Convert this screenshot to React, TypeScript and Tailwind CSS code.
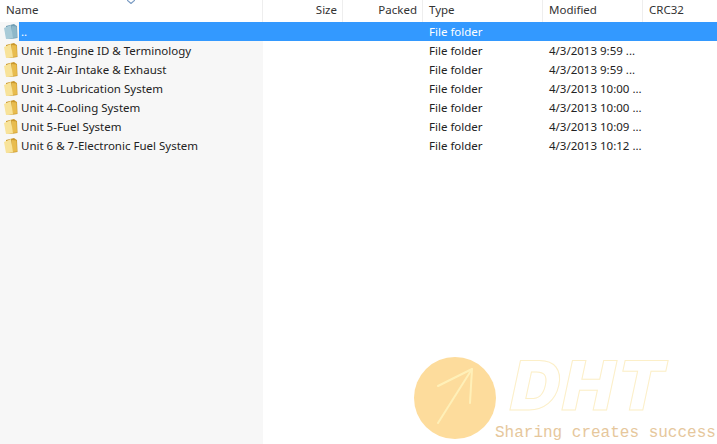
const rows = [
  'Unit 1-Engine ID & Terminology',
  'Unit 2-Air Intake & Exhaust',
  'Unit 3 -Lubrication System',
  'Unit 4-Cooling System',
  'Unit 5-Fuel System',
  'Unit 6 & 7-Electronic Fuel System',
]
const dates = ['4/3/2013 9:59 ...', '4/3/2013 9:59 ...', '4/3/2013 10:00 ...', '4/3/2013 10:00 ...', '4/3/2013 10:09 ...', '4/3/2013 10:12 ...']

function Folder({ up }: { up?: boolean }) {
  return (
    <svg width="15" height="17" viewBox="0 0 15 17" className="shrink-0">
      <path d="M3 3 L11 1 L13 2.5 L14 3 L14.5 15 L8 16 L3 15 Z" fill={up ? '#6f9db3' : '#c8962a'} />
      <path d="M9 3 L13.5 3.5 L14 14.5 L9 15 Z" fill={up ? '#8fb8c9' : '#e8bc4e'} />
      <path d="M1 5 L8 2 L10 15.5 L3 16 Z" fill={up ? '#a9cbd8' : '#f8e39a'} />
    </svg>
  )
}

export default function App() {
  return (
    <div className="relative w-[717px] h-[444px] overflow-hidden bg-white text-[11.5px] text-[#222] font-['Noto_Sans',sans-serif]">
      <div className="flex h-[22px] items-center leading-[20px] text-[#333]">
        <div className="relative w-[263px] pl-[6px] pb-[3px] border-r border-[#eeeeee] h-full flex items-center">
          Name
          <svg width="8" height="4" viewBox="0 0 8 4" className="absolute left-[127px] top-0">
            <path d="M0 0 L4 3.5 L8 0" fill="none" stroke="#7b9cc4" strokeWidth="1.2" />
          </svg>
        </div>
        <div className="w-[80px] pr-[5px] pb-[3px] text-right border-r border-[#eeeeee] h-full flex items-center justify-end">Size</div>
        <div className="w-[80px] pr-[5px] pb-[3px] text-right border-r border-[#eeeeee] h-full flex items-center justify-end">Packed</div>
        <div className="w-[120px] pl-[6px] pb-[3px] border-r border-[#eeeeee] h-full flex items-center">Type</div>
        <div className="w-[100px] pl-[6px] pb-[3px] border-r border-[#eeeeee] h-full flex items-center">Modified</div>
        <div className="flex-1 pl-[6px] pb-[3px] h-full flex items-center">CRC32</div>
      </div>
      <div className="flex h-[422px]">
        <div className="w-[263px] bg-[#f7f7f7] shrink-0" >
          <div className="flex h-[19px] items-center pl-[3px]">
            <Folder up />
            <div className="ml-[1px] flex-1 h-full bg-[#3399ff] text-white pl-[2px] leading-[19px]">..</div>
          </div>
          {rows.map(r => (
            <div key={r} className="flex h-[19px] items-center pl-[3px]">
              <Folder />
              <span className="ml-[3px] whitespace-nowrap leading-[18px]">{r}</span>
            </div>
          ))}
        </div>
        <div className="flex-1">
          <div className="flex h-[19px] items-center bg-[#3399ff] text-white">
            <div className="ml-[166px] leading-[19px]">File folder</div>
          </div>
          {rows.map((r, i) => (
            <div key={r} className="flex h-[19px] items-center leading-[18px]">
              <div className="ml-[166px] w-[120px]">File folder</div>
              <div className="whitespace-nowrap">{dates[i]}</div>
            </div>
          ))}
        </div>
      </div>
      {/* watermark */}
      <div className="absolute left-[414px] top-[357px] w-[82px] h-[82px] rounded-full bg-[#fddc9c]">
        <svg width="82" height="82" viewBox="0 0 82 82">
          <g fill="none" stroke="#fff0b8" strokeWidth="2" strokeLinecap="round" strokeLinejoin="round">
            <path d="M24 66 L58 12" />
            <path d="M24 29 L58 12 L56 46" />
          </g>
        </svg>
      </div>
      <div className="absolute left-[512px] top-[345px] -skew-x-12 text-[68px] leading-[80px] font-black tracking-[3px] text-white [-webkit-text-stroke:1px_#fcefc8] font-['Inter',sans-serif]">DHT</div>
      <div className="absolute left-[495px] top-[424px] text-[16px] leading-[18px] whitespace-nowrap text-[#e6c79c] font-['Liberation_Mono',monospace]">Sharing creates success</div>
    </div>
  )
}
